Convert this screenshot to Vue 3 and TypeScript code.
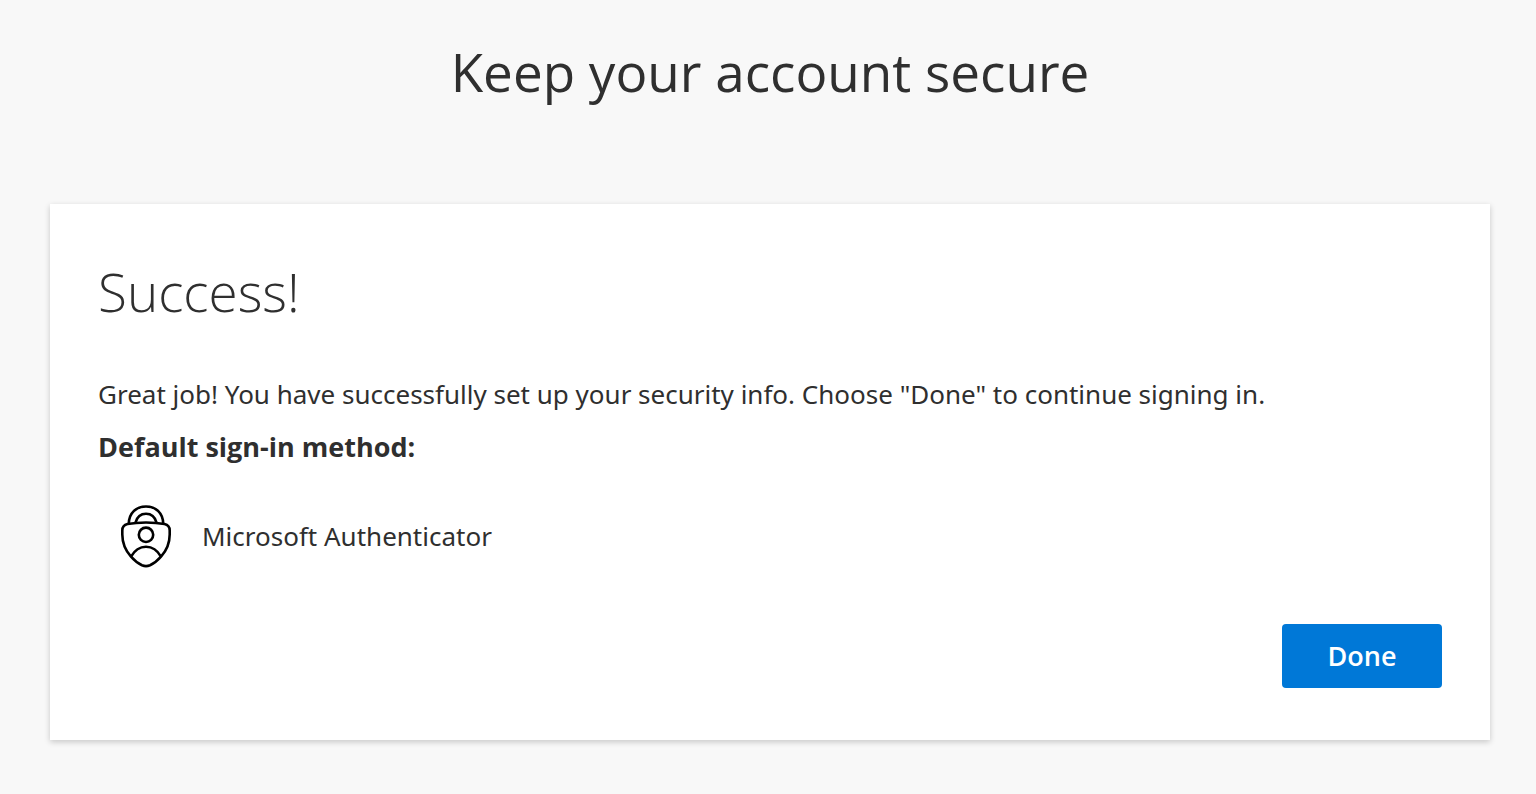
<script setup lang="ts">
const method: string = 'Microsoft Authenticator'
</script>

<template>
  <main class="page">
    <h1 class="title">Keep your account secure</h1>
    <section class="card">
      <h2 class="heading">Success!</h2>
      <p class="message">Great job! You have successfully set up your security info. Choose "Done" to continue signing in.</p>
      <h3 class="label">Default sign-in method:</h3>
      <div class="method">
        <svg class="icon" viewBox="0 0 52 64" fill="none" stroke="#000" stroke-width="2.6" aria-hidden="true">
          <path d="M8.800 19.500C9 9 16 2.500 26 2.500S43 9 43.200 19.500" />
          <path d="M15.500 18.500C17 13 20.500 9.700 26 9.700S35 13 36.500 18.500" />
          <path d="M26 18.500C19 18.500 13 19 7.500 20.100C4 20.900 2.300 23 2.300 26.500V30.500C2.300 38.500 5.500 46.500 11 52.700C14.500 56.700 18 59.500 22 61.300C24.500 62.300 27.500 62.300 30 61.300C34 59.500 37.500 56.700 41 52.700C46.500 46.500 49.700 38.500 49.700 30.500V26.500C49.700 23 48 20.900 44.500 20.100C39 19 33 18.500 26 18.500Z" />
          <circle cx="26" cy="30.800" r="7.200" />
          <path d="M11 52.700C14.500 46.500 19.500 42.800 26 42.800S37.500 46.500 41 52.700" />
        </svg>
        <span>{{ method }}</span>
      </div>
      <div class="actions">
        <button class="done" type="button">Done</button>
      </div>
    </section>
  </main>
</template>

<style>
body {
  background: #f8f8f8;
}
</style>

<style scoped>
.page {
  padding: 36px 46px 54px 50px;
  color: #2f2f2f;
  font-family: "Segoe UI", "Noto Sans", "Open Sans", sans-serif;
  font-size: 26px;
  line-height: 36px;
}
.title,
.heading {
  font-family: "Segoe UI", "Open Sans", "Noto Sans", sans-serif;
  font-size: 53px;
  line-height: 72px;
}
.title {
  margin: 0 0 96px;
  font-weight: 400;
  text-align: center;
}
.card {
  padding: 52px 48px;
  background: #fff;
  box-shadow: 0 2px 6px rgba(0, 0, 0, 0.2);
}
.heading {
  margin: 0 0 48px;
  font-weight: 300;
}
.message {
  margin: 0 0 16px;
}
.label,
.done {
  font-family: "Segoe UI", "Open Sans", "Noto Sans", sans-serif;
  font-size: 27px;
  line-height: 38px;
}
.label {
  margin: 0 0 38px;
  font-weight: 700;
}
.method {
  display: flex;
  align-items: center;
  gap: 30px;
  padding-left: 22px;
}
.icon {
  width: 52px;
  height: 64px;
}
.actions {
  display: flex;
  justify-content: flex-end;
  margin-top: 56px;
}
.done {
  width: 160px;
  height: 64px;
  border: 0;
  border-radius: 4px;
  background: #0078d7;
  color: #fff;
  font-weight: 600;
}
</style>
